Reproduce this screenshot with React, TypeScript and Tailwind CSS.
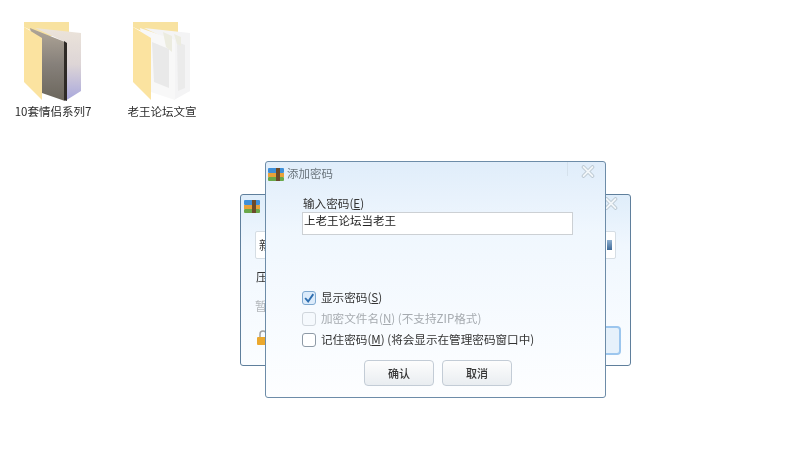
import React from 'react'

const cjk = 'font-["Noto_Sans_CJK_SC","Noto_Sans",sans-serif]'

// folder opened with its contents showing; "couple" has the dark cover, "docs" the paper sheets
const FolderIcon = ({ kind }: { kind: 'couple' | 'docs' }) => (
  <svg width="64" height="82" viewBox="0 0 64 82" className="block">
    <defs>
      <linearGradient id={`back-${kind}`} x1="0" y1="0" x2="0" y2="1">
        <stop offset="0" stopColor="#ece4da" />
        <stop offset="0.5" stopColor="#ddd5d6" />
        <stop offset="1" stopColor="#a8a7dd" />
      </linearGradient>
      <linearGradient id={`front-${kind}`} x1="0" y1="0" x2="0" y2="1">
        <stop offset="0" stopColor="#b0a698" />
        <stop offset="0.5" stopColor="#86807a" />
        <stop offset="1" stopColor="#6b665c" />
      </linearGradient>
    </defs>
    <path d="M3 2 H48 V16 H22 L3 7 Z" fill="#f8e2a0" />
    {kind === 'couple' ? (
      <>
        <path d="M14 8 L60 13 V71 L44 81 V22 Z" fill={`url(#back-${kind})`} />
        <path d="M9 8 L44 22 V81 L21 73 Z" fill={`url(#front-${kind})`} />
        <path d="M43 21 L46 23 V81 L43 80 Z" fill="#2e2a26" />
      </>
    ) : (
      <>
        <path d="M14 8 L60 13 V71 L44 80 V22 Z" fill="#f4f4f5" />
        <path d="M10 8 L45 20 V80 L21 72 Z" fill="#f8f8f8" />
        <path d="M22 22 L39 29 V68 L24 62 Z" fill="#e9e9e9" />
        <path d="M33 12 L42 16 V32 L36 27 Z" fill="#ecece0" />
        <path d="M47 22 L55 25 V68 L48 71 Z" fill="#ebebeb" />
        <path d="M44 14 L51 17 V26 L47 24 Z" fill="#ecece0" />
      </>
    )}
    <path d="M3 7 L21 18 V80 L3 62 Z" fill="#fbe3a0" />
  </svg>
)

// winrar style books icon
const RarIcon = () => (
  <svg width="16" height="13" viewBox="0 0 16 13" className="block">
    <rect x="0" y="0" width="16" height="5" rx="1" fill="#3f8fd8" />
    <rect x="0" y="5" width="16" height="4" fill="#e8a23a" />
    <rect x="0" y="9" width="16" height="4" rx="1" fill="#6aa84a" />
    <rect x="8" y="0" width="4" height="13" fill="#6b4a2a" />
  </svg>
)

const CloseIcon = () => (
  <svg width="14" height="13" viewBox="0 0 14 13" className="block">
    <path d="M2.5 2 L11.5 11 M11.5 2 L2.5 11" stroke="#b9c6d0" strokeWidth="3.6" strokeLinecap="round" />
    <path d="M2.5 2 L11.5 11 M11.5 2 L2.5 11" stroke="#f2f6f9" strokeWidth="1.8" strokeLinecap="round" />
  </svg>
)

const Desktop = ({ label, kind }: { label: string; kind: 'couple' | 'docs' }) => (
  <div className="flex w-[84px] flex-col items-center">
    <FolderIcon kind={kind} />
    <span className="mt-[1px] text-[11.5px] leading-[16px] whitespace-nowrap text-[#2b2b2b]">{label}</span>
  </div>
)

const Check = ({ checked, disabled }: { checked?: boolean; disabled?: boolean }) => (
  <span
    className={`flex h-[14px] w-[14px] shrink-0 items-center justify-center rounded-[3px] border ${
      disabled ? 'border-[#d0d6dc] bg-[#f5f9fd]' : checked ? 'border-[#7fa9d0] bg-[#dcebfa]' : 'border-[#8e9aa6] bg-white'
    }`}
  >
    {checked && (
      <svg width="14" height="14" viewBox="0 0 14 14">
        <path d="M2.5 7 L6 11 L12 2.5" fill="none" stroke="#2f6fb0" strokeWidth="2.2" />
      </svg>
    )}
  </span>
)

const Option = ({ checked, disabled, children }: { checked?: boolean; disabled?: boolean; children: React.ReactNode }) => (
  <div className={`flex h-[21px] items-center gap-[5px] text-[11.6px] ${disabled ? 'text-[#a6abb0]' : 'text-[#333]'}`}>
    <Check checked={checked} disabled={disabled} />
    <span className="whitespace-nowrap">{children}</span>
  </div>
)

const DialogButton = ({ children }: { children: React.ReactNode }) => (
  <button className="h-[26px] w-[70px] rounded-[4px] border border-[#c3ccd6] bg-gradient-to-b from-[#fdfdfd] to-[#e9edf1] text-[11px] font-medium text-[#333]">
    {children}
  </button>
)

export default function App() {
  return (
    <div className={`relative h-[458px] w-[800px] overflow-hidden bg-white blur-[0.4px] ${cjk}`}>
      <div className="flex gap-[25px] pt-[20px] pl-[11px]">
        <Desktop label="10套情侣系列7" kind="couple" />
        <Desktop label="老王论坛文宣" kind="docs" />
      </div>

      {/* window behind */}
      <div className="absolute top-[194px] left-[240px] h-[172px] w-[391px] rounded-[3px] border border-[#5f7f9c] bg-gradient-to-b from-[#dfedfa] via-[#f0f7fe] via-30% to-[#fbfdff]">
        <div className="absolute top-[5px] left-[3px]">
          <RarIcon />
        </div>
        <div className="absolute top-[2px] right-[12px]">
          <CloseIcon />
        </div>
        <div className="absolute top-[36px] left-[14px] flex h-[28px] w-[361px] items-center justify-between rounded-[2px] border border-[#d5dde4] bg-white pl-[3px] text-[12px] text-[#333]">
          <span>新</span>
          <span className="mr-[3px] h-[10px] w-[5px] bg-gradient-to-b from-[#8fb0d0] to-[#3f6a98]" />
        </div>
        <span className="absolute top-[73px] left-[15px] text-[12px] text-[#333]">压</span>
        <span className="absolute top-[102px] left-[14px] text-[12px] text-[#b3b7bb]">暂</span>
        <svg width="12" height="16" viewBox="0 0 12 16" className="absolute top-[135px] left-[16px]">
          <path d="M3 7 V4 a3 3 0 0 1 6 0 V7" fill="none" stroke="#a0a0a0" strokeWidth="1.5" />
          <rect x="0" y="7" width="12" height="8" rx="1" fill="#eba82e" />
        </svg>
        <div className="absolute top-[131px] right-[9px] h-[29px] w-[40px] rounded-[4px] border-2 border-[#9cc6ee] bg-[#e6f1fb]" />
      </div>

      {/* add password dialog */}
      <div className="absolute top-[161px] left-[265px] flex h-[237px] w-[341px] flex-col rounded-[3px] border border-[#6d8ca8] bg-gradient-to-b from-[#e0edfa] via-[#f0f7fe] via-30% to-[#fdfeff]">
        <div className="relative flex h-[23px] items-center gap-[3px] pt-[1px] pl-[2px]">
          <RarIcon />
          <span className="text-[11.5px] text-[#6a747c]">添加密码</span>
          <span className="absolute top-0 left-[301px] h-[14px] w-px bg-[#d5e1ec]" />
          <span className="absolute top-[3px] left-[315px]">
            <CloseIcon />
          </span>
        </div>
        <div className="flex flex-1 flex-col pt-[11px] pl-[36px]">
          <span className="pl-px text-[11.6px] leading-[15px] text-[#333]">输入密码(<u>E</u>)</span>
          <div className="mt-px flex h-[23px] w-[271px] items-center border border-[#ccd0d4] bg-white pb-[5px] pl-[1px] text-[11.5px] text-[#222]">
            上老王论坛当老王
          </div>
          <div className="mt-[52px] flex flex-col">
            <Option checked>显示密码(<u>S</u>)</Option>
            <Option disabled>加密文件名(<u>N</u>) (不支持ZIP格式)</Option>
            <Option>记住密码(<u>M</u>) (将会显示在管理密码窗口中)</Option>
          </div>
          <div className="mt-[10px] ml-[62px] flex gap-[8px]">
            <DialogButton>确认</DialogButton>
            <DialogButton>取消</DialogButton>
          </div>
        </div>
      </div>
    </div>
  )
}
